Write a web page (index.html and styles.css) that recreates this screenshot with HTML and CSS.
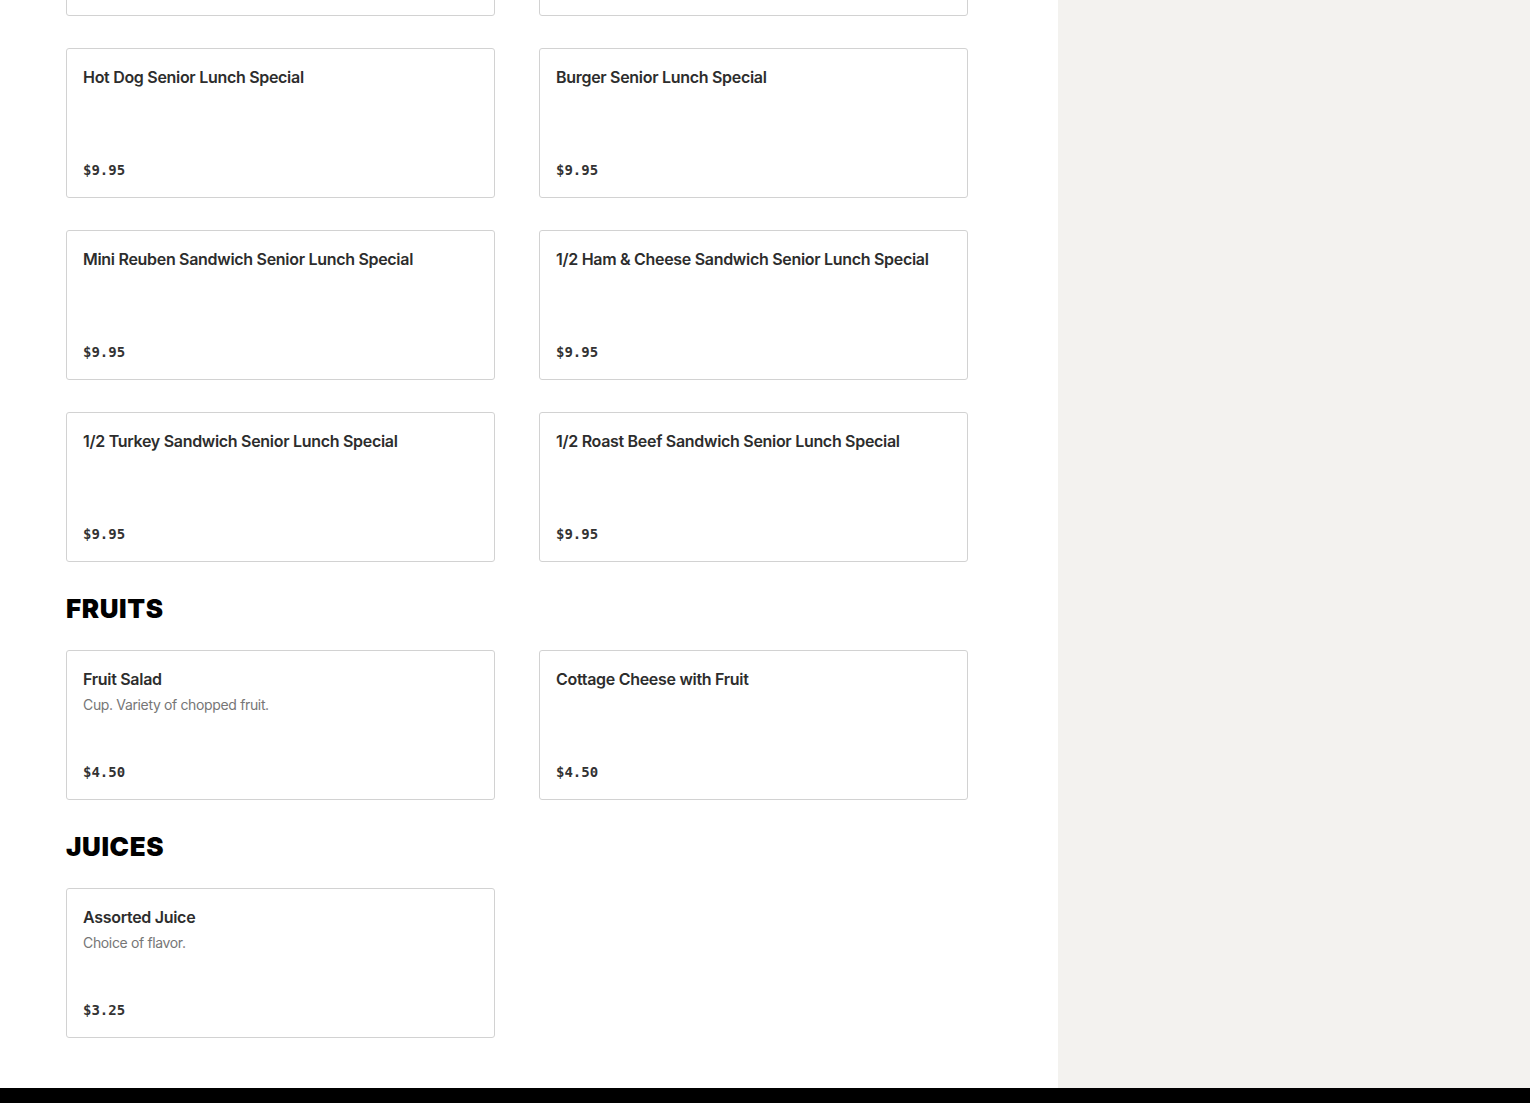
FILE: index.html
```html
<!DOCTYPE html>
<html lang="en">
<head>
  <meta charset="UTF-8">
  <meta name="viewport" content="width=device-width, initial-scale=1.0">
  <title>Menu</title>
  <link rel="stylesheet" href="styles.css">
</head>
<body>
  <div class="page">
    <main class="menu">

      <section class="category category-first">
        <div class="item-grid">
          <div class="item-card"></div>
          <div class="item-card"></div>

          <div class="item-card">
            <h3 class="item-name">Hot Dog Senior Lunch Special</h3>
            <span class="item-price">$9.95</span>
          </div>
          <div class="item-card">
            <h3 class="item-name">Burger Senior Lunch Special</h3>
            <span class="item-price">$9.95</span>
          </div>

          <div class="item-card">
            <h3 class="item-name">Mini Reuben Sandwich Senior Lunch Special</h3>
            <span class="item-price">$9.95</span>
          </div>
          <div class="item-card">
            <h3 class="item-name">1/2 Ham &amp; Cheese Sandwich Senior Lunch Special</h3>
            <span class="item-price">$9.95</span>
          </div>

          <div class="item-card">
            <h3 class="item-name">1/2 Turkey Sandwich Senior Lunch Special</h3>
            <span class="item-price">$9.95</span>
          </div>
          <div class="item-card">
            <h3 class="item-name">1/2 Roast Beef Sandwich Senior Lunch Special</h3>
            <span class="item-price">$9.95</span>
          </div>
        </div>
      </section>

      <section class="category">
        <h2 class="category-title">FRUITS</h2>
        <div class="item-grid">
          <div class="item-card">
            <h3 class="item-name">Fruit Salad</h3>
            <p class="item-desc">Cup. Variety of chopped fruit.</p>
            <span class="item-price">$4.50</span>
          </div>
          <div class="item-card">
            <h3 class="item-name">Cottage Cheese with Fruit</h3>
            <span class="item-price">$4.50</span>
          </div>
        </div>
      </section>

      <section class="category">
        <h2 class="category-title">JUICES</h2>
        <div class="item-grid">
          <div class="item-card">
            <h3 class="item-name">Assorted Juice</h3>
            <p class="item-desc">Choice of flavor.</p>
            <span class="item-price">$3.25</span>
          </div>
        </div>
      </section>

    </main>
    <aside class="cart"></aside>
  </div>
  <footer class="site-footer"></footer>
</body>
</html>
```

FILE: styles.css
```css
body {
  margin: 0;
  font-family: Inter, 'Noto Sans', sans-serif;
  color: #2d2d2d;
  background: #fff;
}
.page {
  display: flex;
}
.menu {
  width: 1058px;
  box-sizing: border-box;
  padding: 0 66px 50px;
}
.cart {
  flex: 1;
  background: #f3f2ef;
}
.category {
  margin-top: 30px;
}
/* page is scrolled down: first row of cards is cut off */
.category-first {
  margin-top: -134px;
}
.category-title {
  margin: 0 0 24px;
  font-size: 26px;
  line-height: 34px;
  font-weight: 900;
  color: #000;
  letter-spacing: 0.6px;
}
.item-grid {
  display: grid;
  grid-template-columns: 429px 429px;
  column-gap: 44px;
  row-gap: 32px;
}
.item-card {
  height: 150px;
  box-sizing: border-box;
  padding: 16px 16px 17px;
  border: 1px solid #d2d2d2;
  border-radius: 3px;
  display: flex;
  flex-direction: column;
  align-items: flex-start;
}
.item-name {
  margin: 0;
  font-size: 16px;
  line-height: 24px;
  font-weight: 600;
  letter-spacing: -0.3px;
  color: #2d2d2d;
}
.item-desc {
  margin: 4px 0 0;
  font-size: 14px;
  line-height: 20px;
  letter-spacing: -0.35px;
  color: #767676;
}
.item-price {
  margin-top: auto;
  font-family: 'DejaVu Sans Mono', monospace;
  font-size: 14px;
  line-height: 20px;
  font-weight: bold;
  color: #333;
}
.site-footer {
  height: 200px;
  background: #000;
}
```
